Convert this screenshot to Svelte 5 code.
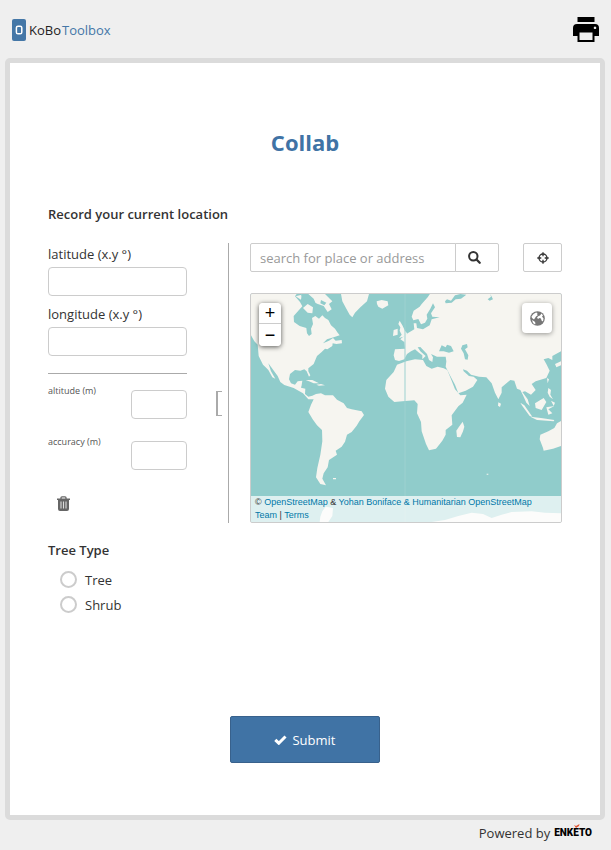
<script>
  let latitude = $state('');
  let longitude = $state('');
  let altitude = $state('');
  let accuracy = $state('');
  let treeType = $state('');
  const options = ['Tree', 'Shrub'];
</script>

<div class="page">
  <header>
    <a class="logo" href="#home" aria-label="KoBo Toolbox">
      <svg width="14" height="22" viewBox="0 0 14 22" aria-hidden="true">
        <rect width="14" height="22" rx="2" fill="#4477a7" />
        <rect x="4.4" y="7.2" width="5.4" height="7.6" rx="1.6" fill="none" stroke="#fff" stroke-width="1.5" />
      </svg>
      <span class="wordmark">KoBo<span class="tool">Toolbox</span></span>
    </a>
    <button class="print" type="button" aria-label="Print">
      <svg width="26" height="26" viewBox="0 0 26 26" aria-hidden="true">
        <path d="M4.500 0h17v5h-17z" />
        <path fill-rule="evenodd" d="M4 7h18a4 4 0 0 1 4 4v8h-4.500v6h-17v-6H0v-8a4 4 0 0 1 4-4zM6.500 15.500v7.500h13v-7.500zM22 9.500a1.300 1.300 0 1 0 .01 0z" />
      </svg>
    </button>
  </header>

  <main>
    <h1>Collab</h1>
    <form onsubmit={(e) => e.preventDefault()}>
      <section class="question" aria-labelledby="location-title">
        <h2 id="location-title">Record your current location</h2>
        <div class="geo">
          <div class="coords">
            <div class="fields">
              <label for="lat">latitude (x.y °)</label>
              <input id="lat" type="text" bind:value={latitude} />
              <label for="lon">longitude (x.y °)</label>
              <input id="lon" type="text" bind:value={longitude} />
              <hr />
              <div class="small-row">
                <label for="alt">altitude (m)</label>
                <input id="alt" type="text" bind:value={altitude} />
              </div>
              <div class="small-row">
                <label for="acc">accuracy (m)</label>
                <input id="acc" type="text" bind:value={accuracy} />
              </div>
              <button class="trash" type="button" aria-label="Clear location">
                <svg width="13" height="15" viewBox="0 0 13 15" aria-hidden="true">
                  <path fill="none" stroke="#666" stroke-width="1.300" d="M4 3V1.800Q4 .8 5 .8h3q1 0 1 1V3" />
                  <path fill="#666" d="M0 2.500h13v1.500h-1V13q0 2-2 2H3q-2 0-2-2V4H0z" />
                  <path stroke="#ddd" stroke-width="1.100" d="M4 5.500v7M6.500 5.500v7M9 5.500v7" />
                </svg>
              </button>
            </div>
            <div class="bracket"></div>
          </div>

          <div class="map-side">
            <div class="tools">
              <div class="search">
                <input type="text" aria-label="search for place or address" placeholder="search for place or address" />
                <button type="button" aria-label="Search">
                  <svg width="13" height="13" viewBox="0 0 13 13" fill="none" stroke="#333" aria-hidden="true">
                    <circle cx="5.300" cy="5.300" r="4.200" stroke-width="2" />
                    <path d="M8.500 8.500l3.200 3.200" stroke-width="2.300" stroke-linecap="round" />
                  </svg>
                </button>
              </div>
              <button class="locate" type="button" aria-label="Detect current location">
                <svg width="12" height="12" viewBox="0 0 12 12" fill="none" stroke="#333" stroke-width="1.300" aria-hidden="true">
                  <circle cx="6" cy="6" r="4" />
                  <path d="M6 .3v4M6 7.700v4M.3 6h4M7.700 6h4" />
                </svg>
              </button>
            </div>

            <div class="map">
              <svg class="world" viewBox="18 18 930 684" preserveAspectRatio="xMidYMid slice" role="img" aria-label="World map">
                <rect x="0" y="0" width="960" height="720" fill="#90cccb" />
                <g fill="#f6f5f0">
                  <path d="M0 0H168L150 25 165 42 172 55 160 68 146 84 147 102 164 114 184 120 186 136 192 144 200 138 198 122 204 108 201 90 211 84 222 92 232 82 240 90 250 96 258 112 270 122 278 134 284 142 266 148 246 154 234 166 252 158 264 150 272 158 290 156 291 166 274 168 263 166 262 174 247 184 240 182 230 192 216 204 206 228 190 241 190 250 196 262 192 266 185 250 178 244 166 248 150 246 135 258 132 274 138 286 150 290 158 280 172 278 170 292 168 299 181 302 180 318 190 326 202 323 213 318 228 316 240 322 264 322 276 335 296 346 306 360 320 364 350 370 357 381 343 400 335 413 320 432 306 440 300 461 290 476 272 488 276 500 252 516 248 538 236 556 232 572 243 592 226 588 213 568 217 540 226 500 232 460 231 426 216 412 203 394 190 372 198 350 206 334 190 334 174 316 146 300 118 291 106 282 98 264 82 242 70 226 78 250 91 272 82 268 70 246 62 238 54 230 41 204 38 170 28 160 18 142 0 130z" />
                  <path d="M190 18L206 32 212 46 236 54 248 72 260 64 252 48 262 40 240 18zM174 60L188 74 202 76 204 58 188 48z" />
                  <path d="M288 18L292 40 304 62 314 80 322 88 330 74 346 58 366 40 372 18zM395 40L410 36 428 40 430 52 412 62 400 56 396 48zM464 98L472 112 480 128 486 136 484 144 462 150 470 140 464 128 466 118 460 108zM446 126L458 122 458 140 444 144z" />
                  <path d="M182 276L202 276 222 286 206 286 192 280zM214 290L228 288 240 292 222 293zM152 25L170 20 168 35z" />
                  <path d="M456 230L484 220 510 214 534 216 544 234 560 242 578 236 596 241 607 246 620 278 630 304 646 322 665 320 653 344 640 355 620 382 622 410 602 426 602 440 592 458 573 482 552 487 543 468 530 430 528 402 516 376 518 348 508 337 472 340 448 342 430 326 420 302 424 276 446 252z" />
                  <path d="M560 10L548 28 530 48 524 56 506 68 500 86 505 97 520 93 528 109 540 104 547 92 545 80 556 62 564 46 570 58 558 76 562 86 584 88 560 94 554 112 534 124 516 120 514 106 506 106 508 124 488 136 470 150 466 154 478 162 480 182 450 184 446 202 450 216 462 219 478 214 486 198 498 190 510 184 522 194 532 202 532 214 542 204 526 190 518 178 526 177 546 198 552 216 562 222 564 208 558 198 576 206 602 206 604 220 602 236 614 260 630 290 640 316 662 308 684 296 697 276 686 266 672 264 656 250 654 244 666 248 678 260 702 266 724 268 740 286 750 314 760 334 770 314 770 298 796 276 808 278 816 302 826 306 834 322 844 344 854 354 848 334 832 312 840 310 858 320 872 306 860 288 872 280 904 270 914 248 904 228 896 214 910 210 922 216 922 204 948 190V0z" />
                  <path d="M653 401L658 416 654 430 646 448 636 447 634 428 642 416z" />
                  <path d="M826 344L838 352 862 386 854 384 832 354zM870 346L896 330 904 342 890 366 872 360zM856 386L888 390 928 396 926 400 876 396zM904 358L928 354 910 364 922 376 910 380zM910 300L918 306 916 320 924 334 914 326 908 314zM918 338L930 344 926 354zM906 270L912 274 908 286zM930 228L948 220V232L934 238z" />
                  <path d="M954 396L936 406 928 420 910 430 886 440 884 454 894 480 896 488 924 482 954 472zM760 343l8 4-3 10-6-4z" />
                  <path d="M226 686L232 670 242 656 264 660 262 684 250 702H224zM560 702L600 696 640 684 680 674 714 678 740 690 770 680 800 672 860 670 900 674 954 676V710H560zM264 570h9v4h-9zM725 557h5v3h-5z" />
                </g>
                <g fill="#90cccb">
                  <path d="M582 190L590 172 602 178 606 170 618 174 626 190 612 194 596 190zM652 172L666 168 668 178 660 184 670 202 668 215 660 214 656 196 648 182zM602 46L620 44 632 34 648 32 664 20 646 18 630 22 618 38 606 34 600 40zM736 18L744 34 734 38 728 34 738 26z" />
                  <path d="M168 20L186 24 198 44 188 48 178 40zM228 36L244 44 238 52 226 46zM202 40L216 48 214 60 204 54z" />
                </g>
                <path d="M480 18V702" stroke="#9dd1d0" stroke-width="3" />
              </svg>
              <div class="zoom">
                <button type="button" aria-label="Zoom in">+</button>
                <button type="button" aria-label="Zoom out">−</button>
              </div>
              <button class="layers" type="button" aria-label="Map layers">
                <svg width="15" height="15" viewBox="0 0 15 15" aria-hidden="true">
                  <circle cx="7.500" cy="7.500" r="7.300" fill="#777" />
                  <path fill="#fff" d="M3.500 3L6 1.500l1.500.5-.5 1.500 1 .5-2 1.500L5 7 4 8.500 2 7 1.500 5.500zM11.500 2.500l1.500 2-1 1 1.500 2-.5 3-1.500-1-.5-2-1.500-.5-1.500 1-1-1.500L8.500 5l1.500-.500zM2 9l2.500 1.500 1 1.500L5 13.500 3 12z" />
                </svg>
              </button>
              <div class="attribution">
                © <a href="#osm">OpenStreetMap</a> &amp; <a href="#hot">Yohan Boniface &amp; Humanitarian OpenStreetMap Team</a> | <a href="#terms">Terms</a>
              </div>
            </div>
          </div>
        </div>
      </section>

      <fieldset>
        <legend>Tree Type</legend>
        {#each options as option}
          <label class="option">
            <input type="radio" name="tree-type" value={option} bind:group={treeType} />
            <span>{option}</span>
          </label>
        {/each}
      </fieldset>

      <button class="submit" type="submit">
        <svg width="13" height="10" viewBox="0 0 13 10" aria-hidden="true">
          <path d="M1.300 4.800l3.500 3.400 6.700-6.700" fill="none" stroke="#fff" stroke-width="3" />
        </svg>
        <span>Submit</span>
      </button>
    </form>
  </main>

  <footer>
    <span>Powered by</span>
    <a class="enketo" href="#enketo">ENKETO
      <svg width="6" height="4" viewBox="0 0 6 4" aria-hidden="true">
        <path d="M0 1l2 1L5.500 0 5 2 2 4z" fill="#e0532f" />
      </svg>
    </a>
  </footer>
</div>

<style>
  :global(body) {
    margin: 0;
    background: #efefef;
  }
  .page {
    min-height: 100vh;
    display: flex;
    flex-direction: column;
    box-sizing: border-box;
    padding: 0 6px 0 5px;
    font-family: "Open Sans", "Noto Sans", sans-serif;
    font-size: 13px;
    line-height: 20px;
    color: #333;
  }
  .page *,
  .page *::before {
    box-sizing: border-box;
  }
  button,
  input {
    font: inherit;
    color: inherit;
    margin: 0;
    padding: 0;
  }
  button {
    background: #fff;
    border: 1px solid #ccc;
    border-radius: 2px;
    display: flex;
    align-items: center;
    justify-content: center;
    cursor: pointer;
  }
  svg {
    display: block;
  }
  header {
    height: 58px;
    display: flex;
    align-items: center;
    justify-content: space-between;
    padding: 2px 6px 0 7px;
  }
  .logo {
    display: flex;
    align-items: center;
    gap: 3px;
    text-decoration: none;
  }
  .wordmark {
    display: flex;
    gap: 1px;
    font-family: "Open Sans", sans-serif;
    font-size: 13px;
    color: #222;
  }
  .tool {
    color: #4477a7;
  }
  .print {
    border: 0;
    background: none;
  }
  main {
    flex: 1;
    background: #fff;
    border: 5px solid #dbdbdb;
    border-radius: 5px;
    padding: 63px 38px 50px;
  }
  h1 {
    margin: 0;
    font-size: 22px;
    line-height: 32px;
    font-weight: 700;
    text-align: center;
    color: #4073a5;
  }
  h2,
  legend {
    margin: 0;
    padding: 0;
    font-size: 13px;
    line-height: 20px;
    font-weight: 600;
  }
  .question {
    padding-top: 46px;
  }
  .geo {
    display: flex;
    gap: 21px;
    margin-top: 19px;
  }
  .coords {
    flex: none;
    width: 181px;
    display: flex;
    align-items: flex-start;
    justify-content: space-between;
    border-right: 1px solid #aaa;
    padding-right: 6px;
  }
  .fields {
    width: 139px;
    display: flex;
    flex-direction: column;
    padding-top: 1px;
  }
  .fields label {
    line-height: 20px;
  }
  .fields input {
    width: 100%;
    height: 29px;
    margin: 3px 0 8px;
    border: 1px solid #ccc;
    border-radius: 4px;
    background: #fff;
  }
  hr {
    width: 100%;
    border: 0;
    border-top: 1px solid #aaa;
    margin: 9px 0 8px;
  }
  .small-row {
    display: flex;
    justify-content: space-between;
    align-items: flex-start;
    height: 51px;
  }
  .small-row label {
    font-size: 9px;
    line-height: 18px;
    color: #555;
  }
  .small-row input {
    width: 56px;
    margin: 8px 0 0;
  }
  .bracket {
    width: 6px;
    height: 25px;
    margin-top: 148px;
    border: 1px solid #aaa;
    border-left-width: 2px;
    border-right: 0;
  }
  .trash {
    align-self: flex-start;
    border: 0;
    padding: 12px 9px;
  }
  .map-side {
    flex: 1;
    min-width: 0;
    display: flex;
    flex-direction: column;
    gap: 21px;
  }
  .tools {
    display: flex;
    justify-content: space-between;
    gap: 24px;
  }
  .search {
    flex: 1;
    display: flex;
    min-width: 0;
  }
  .search input {
    flex: 1;
    min-width: 0;
    height: 29px;
    padding: 0 9px;
    border: 1px solid #ccc;
    border-radius: 2px 0 0 2px;
  }
  .search input::placeholder {
    color: #999;
    opacity: 1;
  }
  .search button {
    width: 44px;
    margin-left: -1px;
    padding-right: 5px;
    border-radius: 0 2px 2px 0;
  }
  .locate {
    width: 39px;
  }
  .map {
    position: relative;
    height: 230px;
    border: 1px solid #ccc;
    border-radius: 2px;
    overflow: hidden;
  }
  .world {
    width: 100%;
    height: 100%;
  }
  .zoom {
    position: absolute;
    left: 8px;
    top: 9px;
    width: 22px;
    border-radius: 4px;
    box-shadow: 0 1px 5px rgba(0, 0, 0, 0.65);
  }
  .zoom button {
    width: 22px;
    height: 22px;
    border: 0;
    border-radius: 0 0 4px 4px;
    font: 400 18px/20px "Liberation Sans", sans-serif;
    color: #000;
  }
  .zoom button:first-child {
    height: 21px;
    border-bottom: 1px solid #ccc;
    border-radius: 4px 4px 0 0;
  }
  .layers {
    position: absolute;
    right: 9px;
    top: 9px;
    width: 30px;
    height: 30px;
    border: 0;
    border-radius: 4px;
    box-shadow: 0 1px 5px rgba(0, 0, 0, 0.4);
  }
  .attribution {
    position: absolute;
    left: 0;
    right: 0;
    bottom: 0;
    padding: 0 20px 0 4px;
    background: rgba(255, 255, 255, 0.7);
    font: 9px/13px "Liberation Sans", Arial, sans-serif;
  }
  .attribution a {
    color: #0078a8;
    text-decoration: none;
  }
  fieldset {
    border: 0;
    margin: 0;
    padding: 17px 0 0;
    min-width: 0;
  }
  legend {
    float: left;
    width: 100%;
    margin-bottom: 7px;
  }
  .option {
    clear: both;
    display: flex;
    align-items: center;
    gap: 8px;
    height: 25px;
    padding-left: 12px;
  }
  .option input {
    appearance: none;
    width: 17px;
    height: 17px;
    border: 2px solid #ccc;
    border-radius: 50%;
    background: #fff;
  }
  .option input:checked {
    background: #4073a5;
    box-shadow: inset 0 0 0 2px #fff;
  }
  .submit {
    width: 150px;
    height: 47px;
    margin: 99px auto 0;
    gap: 5px;
    background: #4073a5;
    border-color: #38618c;
    color: #fff;
  }
  footer {
    height: 30px;
    display: flex;
    justify-content: flex-end;
    align-items: center;
    gap: 4px;
    padding: 0 13px 4px 0;
  }
  .enketo {
    position: relative;
    font: 900 10px/20px Roboto, sans-serif;
    color: #000;
    text-decoration: none;
  }
  .enketo svg {
    position: absolute;
    left: 20px;
    top: 1px;
  }
</style>
